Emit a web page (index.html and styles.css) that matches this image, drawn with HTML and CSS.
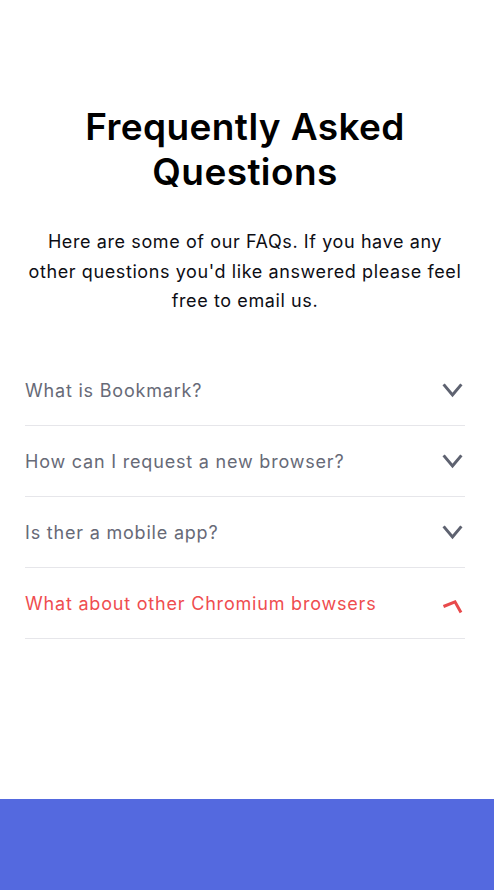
FILE: index.html
```html
<!DOCTYPE html>
<html lang="en">
<head>
<meta charset="utf-8">
<title>FAQ</title>
<link rel="stylesheet" href="styles.css">
</head>
<body>
<main class="page">
  <section class="faq">
    <h2 class="faq-title">Frequently Asked Questions</h2>
    <p class="faq-intro">Here are some of our FAQs. If you have any other questions you'd like answered please feel free to email us.</p>
    <ul class="faq-list">
      <li class="faq-item">
        <span class="faq-q">What is Bookmark?</span>
        <svg class="faq-icon" width="24" height="24" viewBox="0 0 24 24"><polyline points="2.6,6.4 11.5,17 20.4,6.4" fill="none" stroke="#5e6270" stroke-width="3"/></svg>
      </li>
      <li class="faq-item">
        <span class="faq-q">How can I request a new browser?</span>
        <svg class="faq-icon" width="24" height="24" viewBox="0 0 24 24"><polyline points="2.6,6.4 11.5,17 20.4,6.4" fill="none" stroke="#5e6270" stroke-width="3"/></svg>
      </li>
      <li class="faq-item">
        <span class="faq-q">Is ther a mobile app?</span>
        <svg class="faq-icon" width="24" height="24" viewBox="0 0 24 24"><polyline points="2.6,6.4 11.5,17 20.4,6.4" fill="none" stroke="#5e6270" stroke-width="3"/></svg>
      </li>
      <li class="faq-item is-open">
        <span class="faq-q">What about other Chromium browsers</span>
        <svg class="faq-icon" width="24" height="24" viewBox="0 0 24 24"><polyline points="2.5,15.5 14,10.8 20,21.5" fill="none" stroke="#e84a4c" stroke-width="3"/></svg>
      </li>
    </ul>
  </section>
  <footer class="band"></footer>
</main>
</body>
</html>
```
FILE: styles.css
```css
* { box-sizing: border-box; }
html, body { margin: 0; padding: 0; background: #fff; overflow: hidden; }
body { font-family: Inter, "Liberation Sans", sans-serif; color: #111; }
.page { display: flex; flex-direction: column; height: 890px; }
.faq {
  flex: 1;
  width: 440px;
  margin-left: 25px;
  padding-top: 104px;
}
.faq-title {
  margin: 0;
  font-size: 37px;
  font-weight: 600;
  line-height: 45px;
  letter-spacing: 0.4px;
  text-align: center;
  color: #000;
}
.faq-intro {
  margin: 33px 0 0;
  font-size: 18px;
  line-height: 29.5px;
  letter-spacing: 0.6px;
  text-align: center;
  color: #0d0d14;
}
.faq-list {
  list-style: none;
  margin: 39.5px 0 0;
  padding: 0;
}
.faq-item {
  display: flex;
  align-items: center;
  justify-content: space-between;
  height: 71px;
  border-bottom: 1px solid #e6e6ea;
}
.faq-q {
  font-size: 18px;
  line-height: 29px;
  letter-spacing: 0.8px;
  color: #676a77;
  padding-top: 1px;
}
.faq-icon { overflow: visible; }
.is-open .faq-q { color: #ef4d4f; }
.band {
  height: 91px;
  background: #5469df;
  margin-right: 2px;
}
```
